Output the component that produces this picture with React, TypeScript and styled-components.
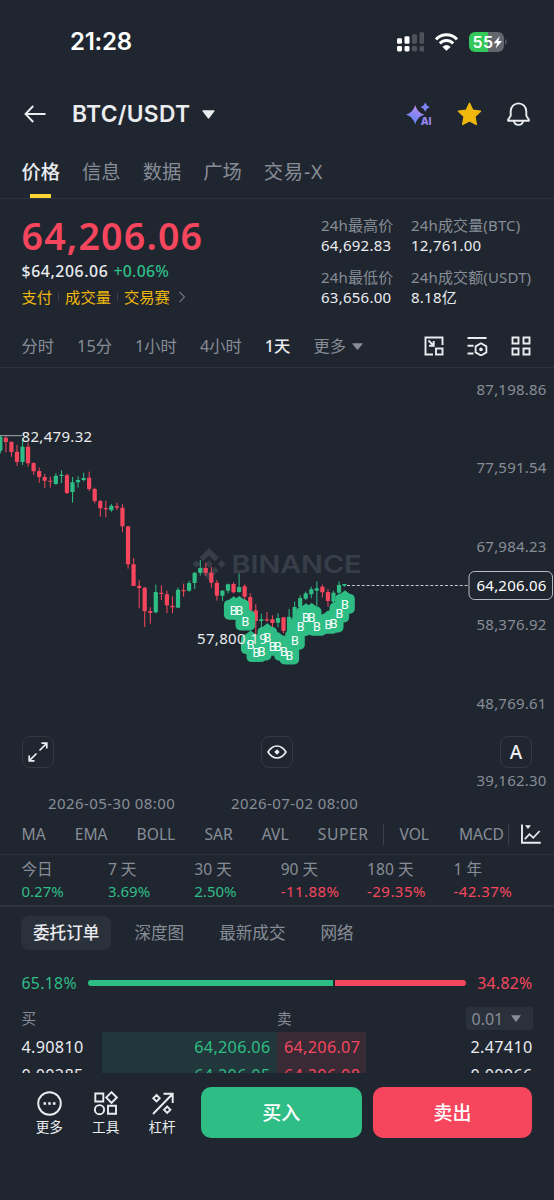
import React from "react";
import styled, { createGlobalStyle } from "styled-components";

const c = {
  bg: "#202630",
  line: "#2c333d",
  text: "#eaecef",
  muted: "#878d96",
  green: "#2ebd85",
  red: "#f6465d",
  yellow: "#f0b90b",
  raised: "#2a313b",
};

const Global = createGlobalStyle`
  body { margin: 0; background: ${c.bg}; }
  * { box-sizing: border-box; }
`;

const Screen = styled.main`
  width: 554px;
  height: 1200px;
  overflow: hidden;
  display: flex;
  flex-direction: column;
  background: ${c.bg};
  color: ${c.text};
  font-family: "Noto Sans", "Noto Sans CJK SC", sans-serif;
  font-size: 15px;
  line-height: 20px;
  white-space: nowrap;
  svg { display: block; flex: none; }
`;

const StatusBar = styled.div`
  height: 83px;
  padding: 0 47px 0 70px;
  display: flex;
  align-items: center;
  justify-content: space-between;
`;
const Clock = styled.span`
  font: 600 24px/28px Inter, sans-serif;
  letter-spacing: -0.25px;
  color: #fff;
`;
const StatusIcons = styled.div`
  display: flex;
  align-items: center;
  gap: 11px;
`;

const Header = styled.header`
  height: 62px;
  padding: 0 24px;
  display: flex;
  align-items: center;
`;
const Pair = styled.h1`
  width: 122px;
  margin: 0 8px 0 26px;
  font: 600 22.8px/30px Inter, sans-serif;
  letter-spacing: 0.3px;
`;
const HeaderActions = styled.div`
  margin-left: auto;
  display: flex;
  align-items: center;
  gap: 25px;
`;

const Tabs = styled.nav`
  height: 54px;
  padding: 0 21.5px;
  display: flex;
  gap: 22px;
  border-bottom: 1px solid ${c.line};
`;
const Tab = styled.span<{ $active?: boolean }>`
  display: flex;
  flex-direction: column;
  align-items: center;
  justify-content: space-between;
  padding-top: 13px;
  font-size: 19.3px;
  line-height: 28px;
  font-weight: ${(p) => (p.$active ? 500 : 400)};
  color: ${(p) => (p.$active ? c.text : c.muted)};
  &:last-child { letter-spacing: 0.8px; }
  &::after {
    content: "";
    width: 21px;
    height: 4px;
    background: ${(p) => (p.$active ? "#fcd535" : "transparent")};
  }
`;

const Summary = styled.section`
  height: 124px;
  padding: 15px 21.5px 0;
  display: flex;
  justify-content: space-between;
`;
const LastPrice = styled.div`
  font-size: 37.5px;
  line-height: 44px;
  font-weight: 600;
  letter-spacing: 1.2px;
  color: ${c.red};
`;
const FiatLine = styled.div`
  display: flex;
  gap: 5px;
  margin-top: 2px;
  font-size: 15.8px;
  line-height: 22px;
  font-weight: 500;
  letter-spacing: 0.6px;
`;
const Change = styled.span`
  color: ${c.green};
  letter-spacing: 0.3px;
`;
const Tags = styled.div`
  display: flex;
  align-items: center;
  margin-top: 4px;
  font-size: 15.3px;
  line-height: 22px;
  color: ${c.yellow};
`;
const TagRule = styled.i`
  width: 1px;
  height: 8px;
  margin: 0 6px;
  background: #3a414c;
`;
const Stats = styled.div`
  width: 211.5px;
  display: grid;
  grid-template-columns: 90px auto;
  align-content: start;
  row-gap: 12px;
  padding-top: 1px;
`;
const StatLabel = styled.div`
  color: ${c.muted};
  letter-spacing: 0.15px;
`;
const StatValue = styled.div`
  letter-spacing: 0.25px;
`;

const Intervals = styled.nav`
  height: 45px;
  padding: 2.5px 23px 0 21.5px;
  display: flex;
  align-items: center;
  gap: 23px;
  border-bottom: 1px solid ${c.line};
  font-size: 16.3px;
  color: ${c.muted};
`;
const Interval = styled.span<{ $active?: boolean }>`
  display: flex;
  align-items: center;
  gap: 6px;
  font-weight: ${(p) => (p.$active ? 500 : 400)};
  color: ${(p) => (p.$active ? c.text : "inherit")};
`;
const IntervalTools = styled.div`
  margin-left: auto;
  display: flex;
  gap: 23px;
`;

const ChartPanel = styled.section`
  position: relative;
  height: 446px;
`;
const ChartControls = styled.div`
  position: absolute;
  top: 368px;
  left: 22px;
  right: 22px;
  display: flex;
  justify-content: space-between;
`;
const ChartButton = styled.button`
  width: 32px;
  height: 32px;
  padding: 0;
  display: grid;
  place-items: center;
  border: 1px solid #323943;
  border-radius: 8px;
  background: ${c.bg};
  color: ${c.text};
  font: 500 19px/20px "Noto Sans", sans-serif;
`;

const Indicators = styled.nav`
  height: 41px;
  padding: 0 13px 0 21.5px;
  display: flex;
  align-items: center;
  gap: 4px;
  border-bottom: 1px solid ${c.line};
  color: ${c.muted};
`;
const IndicatorList = styled.div`
  width: 482.5px;
  display: flex;
  align-items: center;
  justify-content: space-between;
  font-size: 15.6px;
  line-height: 21px;
`;
const MainIndicators = styled.div`
  width: 347px;
  display: flex;
  justify-content: space-between;
`;
const Indicator = styled.span<{ $wide?: boolean }>`
  letter-spacing: ${(p) => (p.$wide ? 0.6 : 0)}px;
`;
const Rule = styled.i`
  width: 1px;
  height: 21px;
  background: #3a414b;
`;
const IndicatorIcon = styled.div`
  margin-left: auto;
`;

const Periods = styled.section`
  height: 52px;
  padding: 3px 0 0 21.5px;
  display: grid;
  grid-template-columns: repeat(6, 86.4px);
  border-bottom: 2px solid ${c.line};
`;
const PeriodLabel = styled.div`
  color: ${c.muted};
  font-size: 15.6px;
  line-height: 22px;
`;
const PeriodValue = styled.div<{ $down?: boolean }>`
  color: ${(p) => (p.$down ? c.red : c.green)};
  line-height: 23px;
  letter-spacing: ${(p) => (p.$down ? 0.45 : 0)}px;
`;

const BookTabs = styled.nav`
  height: 50px;
  padding: 1px 21px 0;
  display: flex;
  align-items: center;
  font-size: 16.6px;
  color: ${c.muted};
`;
const BookTab = styled.span<{ $active?: boolean }>`
  padding: 0 12px;
  margin-right: 11px;
  line-height: 34px;
  border-radius: 8px;
  font-weight: ${(p) => (p.$active ? 500 : 400)};
  color: ${(p) => (p.$active ? c.text : "inherit")};
  background: ${(p) => (p.$active ? c.raised : "transparent")};
`;

const Ratio = styled.div`
  height: 50px;
  padding: 2px 21.5px 0;
  display: flex;
  align-items: center;
  justify-content: space-between;
  font-size: 15.8px;
`;
const RatioText = styled.span<{ $sell?: boolean }>`
  color: ${(p) => (p.$sell ? c.red : c.green)};
  letter-spacing: 0.3px;
`;
const RatioBar = styled.div`
  width: 377.5px;
  display: grid;
  grid-template-columns: 65.18fr 34.82fr;
  gap: 2px;
`;
const RatioPart = styled.i<{ $sell?: boolean }>`
  height: 6px;
  border-radius: ${(p) => (p.$sell ? "0 3px 3px 0" : "3px 0 0 3px")};
  background: ${(p) => (p.$sell ? c.red : c.green)};
`;

const BookHead = styled.div`
  height: 25px;
  padding: 0 21.5px;
  display: grid;
  grid-template-columns: 255.5px 1fr auto;
  align-items: start;
  font-size: 14.6px;
  line-height: 22px;
  color: ${c.muted};
`;
const Precision = styled.span`
  width: 67px;
  height: 23px;
  padding: 0 12px 0 6px;
  display: flex;
  align-items: center;
  justify-content: space-between;
  border-radius: 3px;
  background: ${c.raised};
  font-size: 16px;
`;
const BookRows = styled.div`
  height: 41px;
  overflow: hidden;
  font-size: 16.2px;
`;
const BookRow = styled.div`
  height: 28px;
  padding: 0 21.5px;
  display: grid;
  grid-template-columns: 80px 175.5px 89px 1fr;
  line-height: 30px;
  letter-spacing: 0.3px;
`;
const Bid = styled.span`
  padding-right: 6.5px;
  text-align: right;
  color: ${c.green};
  background: #22373b;
`;
const Ask = styled.span`
  padding-left: 7px;
  color: ${c.red};
  background: #382b36;
`;
const AskSize = styled.span`
  text-align: right;
`;

const BottomBar = styled.footer`
  flex: 1;
  padding: 14px 22px 0 21px;
  display: flex;
  align-items: flex-start;
`;
const Shortcut = styled.div`
  width: 56.5px;
  padding-top: 4px;
  display: flex;
  flex-direction: column;
  align-items: center;
  gap: 1px;
  font-size: 13.6px;
`;
const TradeButton = styled.button<{ $sell?: boolean }>`
  width: ${(p) => (p.$sell ? 159 : 161)}px;
  height: 51px;
  margin-left: ${(p) => (p.$sell ? 11.5 : 10.5)}px;
  padding-bottom: 1px;
  border: 0;
  border-radius: 10px;
  background: ${(p) => (p.$sell ? c.red : c.green)};
  color: #fff;
  font: 500 19px/26px "Noto Sans", "Noto Sans CJK SC", sans-serif;
`;

const Caret = ({ w, h, color }: { w: number; h: number; color: string }) => (
  <svg width={w} height={h} viewBox="0 0 12 8" preserveAspectRatio="none">
    <path d="M.8.3h10.4q.8 0 .3.7L6.6 7.3q-.6.8-1.2 0L.5 1Q0 .3.8.3z" fill={color} />
  </svg>
);

type Candle = [number, number, number, number, number];
// up flag, high, body top, body bottom, low (thirds of a pixel, from y=52)
const candles: Candle[] = [
  [1, 46, 50, 92, 100], [0, 48, 53, 66, 97], [0, 65, 65, 96, 110], [0, 75, 95, 126, 137],
  [1, 55, 80, 126, 135], [0, 68, 80, 130, 140], [0, 127, 129, 154, 165], [0, 143, 153, 171, 188],
  [0, 162, 171, 182, 204], [0, 170, 182, 185, 203], [1, 160, 167, 192, 194], [1, 151, 164, 168, 189],
  [0, 161, 166, 219, 222], [1, 171, 187, 216, 248], [1, 169, 180, 187, 203], [1, 158, 174, 180, 184],
  [0, 155, 173, 207, 213], [0, 203, 207, 243, 250], [0, 240, 243, 265, 290], [0, 242, 264, 268, 292],
  [1, 252, 257, 271, 275], [0, 248, 259, 263, 270], [0, 253, 263, 319, 336], [0, 319, 319, 433, 446],
  [0, 414, 433, 498, 498], [0, 481, 497, 504, 565], [0, 501, 503, 574, 621], [0, 562, 573, 579, 611],
  [1, 494, 516, 577, 580], [0, 496, 518, 522, 540], [0, 512, 523, 556, 580], [0, 529, 557, 562, 580],
  [1, 503, 509, 563, 563], [0, 491, 510, 514, 530], [1, 482, 489, 512, 515], [1, 456, 458, 489, 507],
  [1, 420, 444, 458, 467], [0, 428, 444, 458, 467], [0, 440, 458, 488, 503], [0, 480, 488, 527, 542],
  [1, 510, 512, 527, 543], [1, 491, 493, 512, 520], [0, 487, 492, 517, 520], [1, 460, 501, 516, 518],
  [0, 493, 499, 530, 540], [0, 520, 531, 572, 575], [0, 552, 571, 603, 660], [1, 581, 598, 603, 628],
  [0, 576, 598, 601, 605], [0, 586, 598, 609, 622], [1, 580, 594, 608, 622], [0, 591, 592, 633, 640],
  [1, 567, 590, 635, 640], [1, 545, 561, 598, 600], [1, 526, 534, 561, 570], [1, 515, 520, 536, 540],
  [1, 500, 508, 523, 535], [1, 484, 505, 512, 560], [0, 494, 500, 517, 532], [0, 507, 516, 543, 560],
  [1, 512, 518, 545, 550], [1, 484, 495, 518, 525],
];

const buys: [number, number][] = [
  [233.7, 242.7], [239.3, 242.3], [245.3, 253.3], [250.7, 277], [256.3, 285], [261.7, 283.3],
  [267.3, 269.7], [272.7, 278.3], [278, 278.3], [284, 283.7], [289.3, 287.3], [295, 272.7],
  [300.7, 259], [306, 249.7], [311.7, 249.3], [317, 258.7], [328.3, 256.7], [333.7, 255.3],
  [339.3, 245.3], [345, 236.7],
];

const axis: [string, number][] = [
  ["87,198.86", 21.5], ["77,591.54", 100], ["67,984.23", 178.5],
  ["58,376.92", 257], ["48,769.61", 336], ["39,162.30", 413],
];

const Chart = () => (
  <svg width="554" height="446" viewBox="0 0 554 446" fontSize="15" letterSpacing="0.2">
    <g fill="#373e48" transform="translate(209 196)">
      <path d="M0-16 9.5-6.5 5.8-2.8 0-8.6-5.8-2.8-9.5-6.5zM0 16-9.5 6.5-5.8 2.8 0 8.6 5.8 2.8 9.5 6.5zM0-3.7 3.7 0 0 3.7-3.7 0zM-12.6-3.7-8.9 0-12.6 3.7-16.3 0zM12.6-3.7 16.3 0 12.6 3.7 8.9 0z" />
    </g>
    <text x="231.5" y="205" fill="#373e48" fontFamily="Inter, sans-serif" fontSize="24.5" fontWeight="600" letterSpacing="0" textLength="130" lengthAdjust="spacingAndGlyphs">BINANCE</text>
    {candles.map(([up, hi, top, bot, lo], i) => {
      const x = 0.3 + i * 5.553;
      const fill = up ? c.green : c.red;
      return (
        <g key={i} fill={fill}>
          <rect x={x - 0.45} y={52 + hi / 3} width="1" height={(lo - hi) / 3} />
          <rect x={x - 2.1} y={52 + top / 3} width="4.2" height={Math.max(1.2, (bot - top) / 3)} rx="0.4" />
        </g>
      );
    })}
    <path d="M341.8 216h5.2l-2.6 3z" fill={c.green} />
    <path d="M347 217.5H469" stroke="#c3c7cd" strokeDasharray="3 1.9" />
    <path d="M0 67.7H22" stroke="#a6abb2" />
    <text x="21.5" y="73.7" fill={c.text} letterSpacing="0.32">82,479.32</text>
    {buys.map(([x, y], i) => (
      <path key={i} fill={c.green} d={`M${x - 4.8} ${y - 10.8}l4.8-3.6 4.8 3.6a5 5 0 0 1 5 5v9.9a5 5 0 0 1-5 5h-9.6a5 5 0 0 1-5-5v-9.9a5 5 0 0 1 5-5z`} />
    ))}
    <text x="197" y="275.7" fill={c.text} letterSpacing="0.32">57,800.19</text>
    {buys.map(([x, y], i) => (
      <text key={i} x={x} y={y + 4.4} fill="#fff" fontSize="12.5" letterSpacing="0" textAnchor="middle" fontFamily="Roboto, sans-serif">B</text>
    ))}
    {axis.map(([v, y]) => (
      <text key={v} x="546.5" y={y + 5.1} fill={c.muted} textAnchor="end">{v}</text>
    ))}
    <rect x="469" y="203.5" width="83.5" height="28" rx="5.5" fill={c.bg} stroke="#b5bac1" />
    <text x="546.5" y="223.2" fill="#fff" textAnchor="end">64,206.06</text>
    <g fill={c.muted} letterSpacing="0.42">
      <text x="48" y="440.6">2026-05-30 08:00</text>
      <text x="231" y="440.6">2026-07-02 08:00</text>
    </g>
  </svg>
);

const Signal = () => (
  <svg width="27.5" height="20" viewBox="0 0 27.5 20">
    {[0, 1, 2, 3].map((i) => (
      <g key={i} fill={i < 2 ? "#fff" : "#4d525b"}>
        <rect x={i * 7.5} y={6.2 - i * 2} width="5" height={5.6 + i * 2} rx="1.4" />
        <rect x={i * 7.5} y="14" width="5" height="5.4" rx="1.4" />
      </g>
    ))}
  </svg>
);
const Wifi = () => (
  <svg width="23" height="18" viewBox="0 0 23 18">
    <g fill="none" stroke="#fff" strokeWidth="3">
      <path d="M1 6.4Q5.4 1.8 11.5 1.8T22 6.4" />
      <path d="M4.8 10.4q2.9-2.9 6.7-2.9t6.7 2.9" />
    </g>
    <path d="M11.5 17.6 7.7 13.9q3.8-3.2 7.6 0z" fill="#fff" stroke="#fff" strokeWidth=".5" />
  </svg>
);
const Battery = () => (
  <svg width="38" height="20" viewBox="0 0 38 20">
    <path d="M6 0h13v20H6a6 6 0 0 1-6-6V6a6 6 0 0 1 6-6z" fill="#34c759" />
    <path d="M19 0h10a6 6 0 0 1 6 6v8a6 6 0 0 1-6 6H19z" fill="#62676e" />
    <path d="M36.2 6.8q3 3.2 0 6.4z" fill="#62676e" />
    <text x="3.6" y="15.8" fill="#fff" fontFamily="Inter, sans-serif" fontWeight="600" fontSize="16" textLength="20.5">55</text>
    <path d="M30.8 4 24.6 11.2h3.6L26.6 16.6 33 9h-3.7z" fill="#fff" />
  </svg>
);
const BackArrow = () => (
  <svg width="22" height="18" viewBox="0 0 22 18" fill="none" stroke={c.text} strokeWidth="1.9">
    <path d="M21.5 9H2M9.2 1 1.5 9l7.7 8" />
  </svg>
);
const AiIcon = () => (
  <svg width="26" height="24" viewBox="0 0 26 24">
    <defs>
      <linearGradient id="ai" x1="0.7" y1="0" x2="0.3" y2="1">
        <stop offset="0" stopColor="#c58be6" />
        <stop offset="0.45" stopColor="#8d86f2" />
        <stop offset="1" stopColor="#5b83f7" />
      </linearGradient>
    </defs>
    <path d="M9.2 3q2 7.6 9 9.7-7 2-9 9.8-2-7.8-9.2-9.8Q7.2 10.6 9.2 3z" fill="url(#ai)" />
    <path d="M19.2.2q1.2 3.9 4.9 4.9-3.7 1-4.9 4.9-1.2-3.9-4.9-4.9 3.7-1 4.9-4.9z" fill="#7d85f5" />
    <text x="14.8" y="22.5" fill="#9a86f0" stroke={c.bg} strokeWidth="2" paintOrder="stroke" fontFamily="Inter, sans-serif" fontSize="10.5" fontWeight="800" textLength="10.8">AI</text>
  </svg>
);
const StarIcon = () => (
  <svg width="25" height="24" viewBox="0 0 25 24">
    <path d="m12.5 1.2 3.3 7 7.7 1-5.6 5.4 1.4 7.9-6.8-3.7-6.8 3.7 1.4-7.9L1.5 9.2l7.7-1z" fill={c.yellow} stroke={c.yellow} strokeWidth="1.4" strokeLinejoin="round" />
  </svg>
);
const BellIcon = () => (
  <svg width="23" height="24" viewBox="0 0 23 24" fill="none" stroke={c.text} strokeWidth="1.9">
    <path d="M3.7 9.2a7.8 7.8 0 0 1 15.6 0v4.6l2.6 3.9v1.1H1.1v-1.1l2.6-3.9z" strokeLinejoin="round" />
    <path d="M6.8 19q1 3.9 4.7 3.9t4.7-3.9" />
  </svg>
);

const tabs = ["价格", "信息", "数据", "广场", "交易-X"];
const stats = [
  ["24h最高价", "64,692.83"], ["24h成交量(BTC)", "12,761.00"],
  ["24h最低价", "63,656.00"], ["24h成交额(USDT)", "8.18亿"],
];
const intervals = ["分时", "15分", "1小时", "4小时", "1天"];
const periods = [
  ["今日", "0.27%"], ["7 天", "3.69%"], ["30 天", "2.50%"],
  ["90 天", "-11.88%"], ["180 天", "-29.35%"], ["1 年", "-42.37%"],
];
const rows = [
  ["4.90810", "64,206.06", "64,206.07", "2.47410"],
  ["0.00285", "64,206.05", "64,206.08", "0.00066"],
];

export default function App() {
  return (
    <Screen>
      <Global />
      <StatusBar>
        <Clock>21:28</Clock>
        <StatusIcons><Signal /><Wifi /><Battery /></StatusIcons>
      </StatusBar>
      <Header>
        <BackArrow />
        <Pair>BTC/USDT</Pair>
        <Caret w={13} h={9} color={c.text} />
        <HeaderActions><AiIcon /><StarIcon /><BellIcon /></HeaderActions>
      </Header>
      <Tabs>
        {tabs.map((t, i) => <Tab key={t} $active={i === 0}>{t}</Tab>)}
      </Tabs>
      <Summary>
        <div>
          <LastPrice>64,206.06</LastPrice>
          <FiatLine><span>$64,206.06</span><Change>+0.06%</Change></FiatLine>
          <Tags>
            支付<TagRule />成交量<TagRule />交易赛
            <svg width="16" height="12" viewBox="0 0 16 12" fill="none" stroke="#6b727c" strokeWidth="1.2">
              <path d="m9.5 1 5 5-5 5" />
            </svg>
          </Tags>
        </div>
        <Stats>
          {stats.map(([l, v]) => (
            <div key={l}><StatLabel>{l}</StatLabel><StatValue>{v}</StatValue></div>
          ))}
        </Stats>
      </Summary>
      <Intervals>
        {intervals.map((t) => <Interval key={t} $active={t === "1天"}>{t}</Interval>)}
        <Interval>更多<Caret w={11} h={7} color={c.muted} /></Interval>
        <IntervalTools>
          <svg width="20" height="20" viewBox="0 0 20 20" fill="none" stroke={c.text} strokeWidth="1.9">
            <path d="M9 18.5H1.5v-17h17V9" />
            <rect x="12" y="12.5" width="6.5" height="6" />
            <path d="m4.5 4.5 4.7 4.7M9.7 5v4.7H5" />
          </svg>
          <svg width="21" height="20" viewBox="0 0 21 20" fill="none" stroke={c.text} strokeWidth="1.9">
            <path d="M.5 2h19M.5 9.8h6M.5 17.5h6" />
            <path d="m14 7.3 5.4 3.1v6L14 19.5l-5.4-3.1v-6z" strokeWidth="1.8" strokeLinejoin="round" />
            <circle cx="14" cy="13.4" r="1.8" fill={c.text} stroke="none" />
          </svg>
          <svg width="20" height="20" viewBox="0 0 20 20" fill="none" stroke={c.text} strokeWidth="1.9">
            <path d="M1.5 1.5h6v6h-6zM12.5 1.5h6v6h-6zM1.5 12.5h6v6h-6zM12.5 12.5h6v6h-6z" />
          </svg>
        </IntervalTools>
      </Intervals>
      <ChartPanel>
        <Chart />
        <ChartControls>
          <ChartButton>
            <svg width="20" height="20" viewBox="0 0 20 20" fill="none" stroke={c.text} strokeWidth="1.7">
              <path d="M11.5 8.5 18.7 1.3M13.5 1.2h5.3v5.3M8.5 11.5l-7.2 7.2M1.2 13.5v5.3h5.3" />
            </svg>
          </ChartButton>
          <ChartButton>
            <svg width="20" height="14" viewBox="0 0 20 14" fill="none" stroke={c.text} strokeWidth="1.7">
              <path d="M1 7q3.8-6 9-6t9 6q-3.8 6-9 6T1 7z" strokeLinejoin="round" />
              <path d="m10 4.3 2.7 2.7L10 9.7 7.3 7z" fill={c.text} stroke="none" />
            </svg>
          </ChartButton>
          <ChartButton>A</ChartButton>
        </ChartControls>
      </ChartPanel>
      <Indicators>
        <IndicatorList>
          <MainIndicators>
            {["MA", "EMA", "BOLL", "SAR", "AVL", "SUPER"].map((t) => (
              <Indicator key={t} $wide={t === "SUPER"}>{t}</Indicator>
            ))}
          </MainIndicators>
          <Rule /><Indicator>VOL</Indicator><span /><Indicator>MACD</Indicator>
        </IndicatorList>
        <Rule />
        <IndicatorIcon>
          <svg width="20" height="20" viewBox="0 0 20 20" fill="none" stroke={c.text} strokeWidth="1.9">
            <path d="M1 .5v18.3h18.8" />
            <path d="m3.8 15.2 4.7-5 3.7 3.6L18.7 7" strokeWidth="1.7" />
            <path d="M4 1.3h6L7 5z" fill={c.text} stroke="none" />
          </svg>
        </IndicatorIcon>
      </Indicators>
      <Periods>
        {periods.map(([l, v]) => (
          <div key={l}><PeriodLabel>{l}</PeriodLabel><PeriodValue $down={v[0] === "-"}>{v}</PeriodValue></div>
        ))}
      </Periods>
      <BookTabs>
        {["委托订单", "深度图", "最新成交", "网络"].map((t, i) => <BookTab key={t} $active={i === 0}>{t}</BookTab>)}
      </BookTabs>
      <Ratio>
        <RatioText>65.18%</RatioText>
        <RatioBar><RatioPart /><RatioPart $sell /></RatioBar>
        <RatioText $sell>34.82%</RatioText>
      </Ratio>
      <BookHead>
        <span>买</span><span>卖</span>
        <Precision>0.01<Caret w={10} h={7} color={c.muted} /></Precision>
      </BookHead>
      <BookRows>
        {rows.map(([bs, b, a, as]) => (
          <BookRow key={b}><span>{bs}</span><Bid>{b}</Bid><Ask>{a}</Ask><AskSize>{as}</AskSize></BookRow>
        ))}
      </BookRows>
      <BottomBar>
        <Shortcut>
          <svg width="25" height="25" viewBox="0 0 25 25" fill="none" stroke={c.text} strokeWidth="1.9">
            <circle cx="12.5" cy="12.5" r="11.3" />
            <path d="M6.5 12.5h2.6M11.2 12.5h2.6M15.9 12.5h2.6" strokeWidth="2.4" />
          </svg>
          更多
        </Shortcut>
        <Shortcut>
          <svg width="25" height="25" viewBox="0 0 25 25" fill="none" stroke={c.text} strokeWidth="1.9">
            <path d="M2.3 2.5h8v8h-8zM15 14.8h8v8h-8zM18.5 1.2l5.3 5.3-5.3 5.3-5.3-5.3z" />
            <circle cx="6.5" cy="18.7" r="4.6" />
          </svg>
          工具
        </Shortcut>
        <Shortcut>
          <svg width="25" height="25" viewBox="0 0 25 25" fill="none" stroke={c.text} strokeWidth="1.9">
            <path d="M3 23 22 3.5M13.5 2.8h9.2V12M6.5 4l3.2 3.2-3.2 3.2-3.2-3.2zM17.2 15.6l3.2 3.2-3.2 3.2-3.2-3.2z" />
          </svg>
          杠杆
        </Shortcut>
        <TradeButton>买入</TradeButton>
        <TradeButton $sell>卖出</TradeButton>
      </BottomBar>
    </Screen>
  );
}
